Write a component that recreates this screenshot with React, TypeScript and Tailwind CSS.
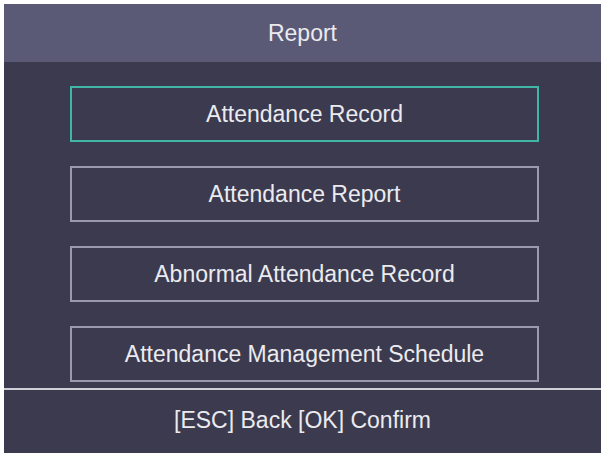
const items = [
  'Attendance Record',
  'Attendance Report',
  'Abnormal Attendance Record',
  'Attendance Management Schedule',
];

export default function App() {
  return (
    <div
      className="w-[604px] h-[453px] bg-white pt-[4px] pl-[4px] overflow-hidden"
      style={{ fontFamily: '"Liberation Sans", Arial, sans-serif' }}
    >
      <div className="w-[597px] h-[449px] flex flex-col bg-[#3c3a4e] text-[#ebebef]">
        {/* Title bar */}
        <div className="h-[58px] bg-[#5a5a76] flex items-center justify-center text-[23px]">
          Report
        </div>

        {/* Menu */}
        <div className="flex-1 flex flex-col gap-[24px] pt-[24px] pl-[66px]">
          {items.map((label, i) => (
            <div
              key={label}
              className={`w-[469px] h-[56px] flex items-center justify-center text-[23px] border-2 ${
                i === 0 ? 'border-[#3fb6a6]' : 'border-[#9c98ae]'
              }`}
            >
              {label}
            </div>
          ))}
        </div>

        {/* Footer */}
        <div className="h-[2px] bg-[#cfcfd8]" />
        <div className="h-[63px] flex items-center justify-center text-[23px] pb-[2px]">
          [ESC] Back [OK] Confirm
        </div>
      </div>
    </div>
  );
}
